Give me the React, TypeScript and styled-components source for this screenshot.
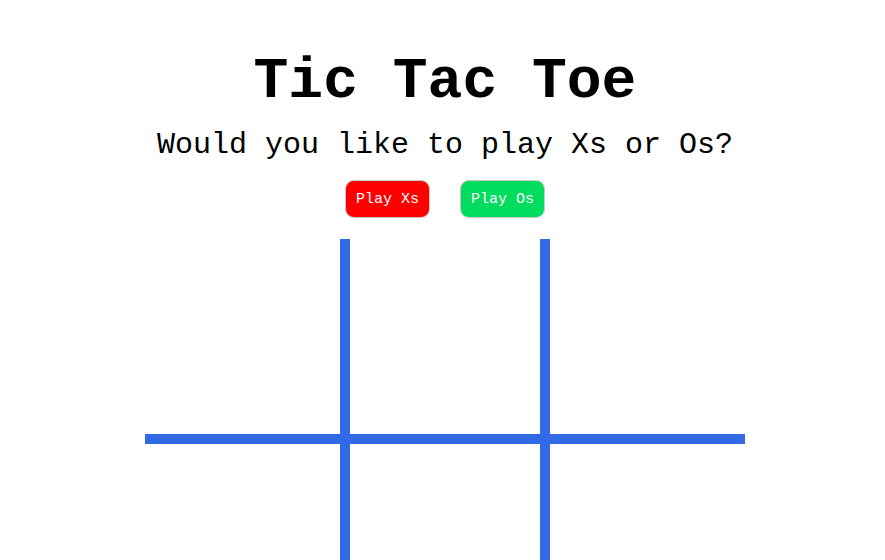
import React from "react";
import styled, { createGlobalStyle } from "styled-components";

const Global = createGlobalStyle`
  html, body { margin: 0; padding: 0; background: #fff; overflow: hidden; }
  body { font-family: "Liberation Mono", "Courier New", monospace; }
`;

const Page = styled.div`
  display: flex;
  flex-direction: column;
  align-items: center;
  padding-left: 5px;
  padding-top: 48px;
`;

const Title = styled.h1`
  margin: 0;
  font-family: "Liberation Mono", "Courier New", monospace;
  font-weight: bold;
  font-size: 58px;
  line-height: 68px;
  color: #000;
`;

const Subtitle = styled.p`
  margin: 11px 0 0;
  font-family: "Liberation Mono", "Courier New", monospace;
  font-size: 30px;
  line-height: 36px;
  color: #000;
`;

const ButtonRow = styled.div`
  display: flex;
  gap: 30px;
  margin-top: 17px;
`;

const PlayButton = styled.button<{ $bg: string }>`
  height: 38px;
  padding: 0 10px;
  border: 1px solid #c8c8c8;
  border-radius: 9px;
  background: ${(p) => p.$bg};
  color: #fff;
  font-family: "Liberation Mono", "Courier New", monospace;
  font-size: 15px;
  cursor: pointer;
`;

const Board = styled.div`
  margin-top: 21px;
  display: grid;
  grid-template-columns: repeat(3, 200px);
  grid-template-rows: repeat(3, 200px);
`;

const Cell = styled.div<{ $row: number; $col: number }>`
  box-sizing: border-box;
  border-color: #3169e6;
  border-style: solid;
  border-width: ${(p) =>
    `${p.$row > 0 ? 5 : 0}px ${p.$col < 2 ? 5 : 0}px ${p.$row < 2 ? 5 : 0}px ${
      p.$col > 0 ? 5 : 0
    }px`};
`;

export default function App() {
  const cells = [];
  for (let r = 0; r < 3; r++) {
    for (let c = 0; c < 3; c++) {
      cells.push(<Cell key={`${r}-${c}`} $row={r} $col={c} />);
    }
  }
  return (
    <>
      <Global />
      <Page>
        <Title>Tic Tac Toe</Title>
        <Subtitle>Would you like to play Xs or Os?</Subtitle>
        <ButtonRow>
          <PlayButton $bg="#ff0000">Play Xs</PlayButton>
          <PlayButton $bg="#00dd5e">Play Os</PlayButton>
        </ButtonRow>
        <Board>{cells}</Board>
      </Page>
    </>
  );
}
